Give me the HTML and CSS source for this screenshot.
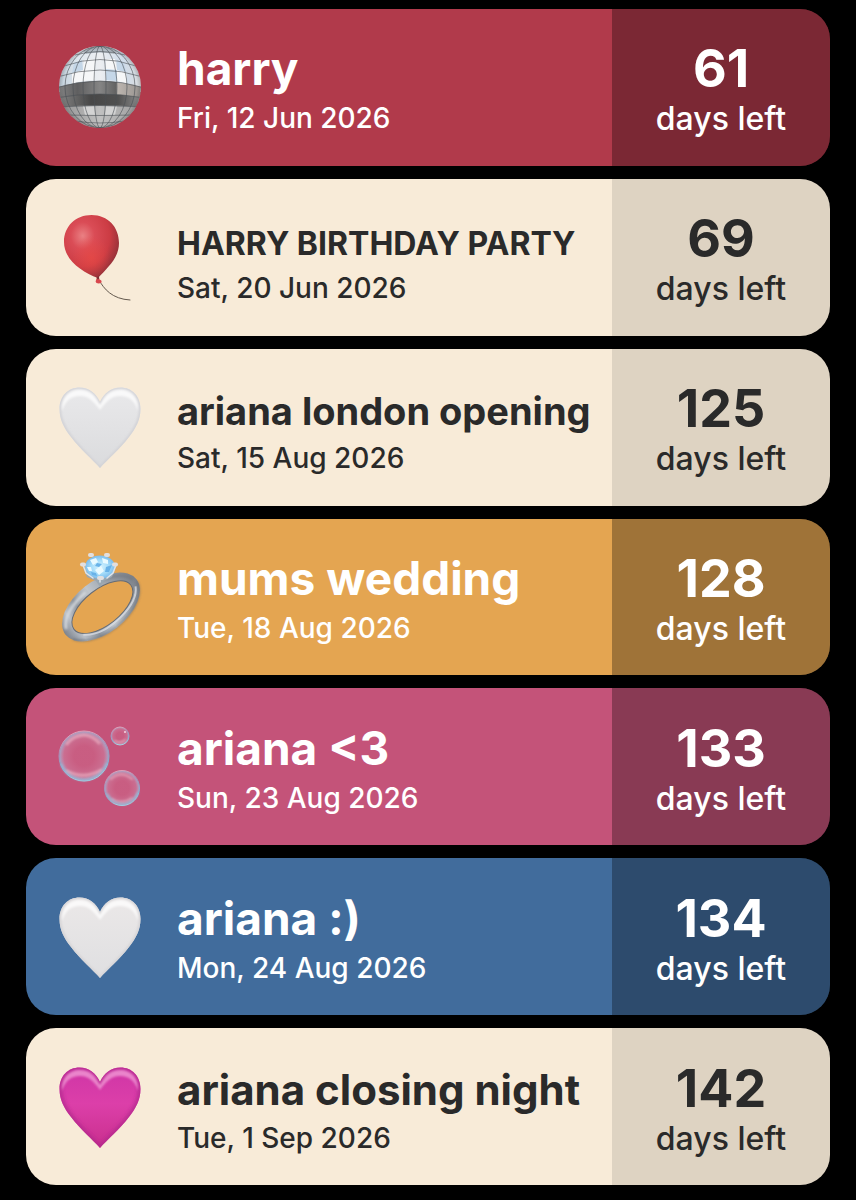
FILE: index.html
```html
<!DOCTYPE html>
<html lang="en">
<head>
<meta charset="utf-8">
<meta name="viewport" content="width=device-width, initial-scale=1">
<title>Countdowns</title>
<link rel="stylesheet" href="styles.css">
</head>
<body>
<svg class="defs" aria-hidden="true">
  <defs>
    <path id="heart-shape" d="M50 91C43 83 30 72 21 60C14 51 9.500 43 9.500 32C9.500 19 18 10.500 29.500 10.500C39 10.500 46 16 50 25C54 16 61 10.500 70.500 10.500C82 10.500 90.500 19 90.500 32C90.500 43 86 51 79 60C70 72 57 83 50 91Z"/>
    <path id="heart-gloss" d="M12 34C11 21 19 13 30 13C39 13 45 18 50 28C55 18 61 13 70 13C81 13 89 21 88 34C85 24 79 19 70 19C61 19 56 25 50 33C44 25 39 19 30 19C21 19 15 24 12 34Z"/>
    <linearGradient id="white-fill" x1="0" y1="0" x2="0" y2="1"><stop offset="0" stop-color="#e9e9eb"/><stop offset=".5" stop-color="#e2e2e4"/><stop offset="1" stop-color="#dadbdd"/></linearGradient>
    <linearGradient id="bright-fill" x1="0" y1="0" x2="0" y2="1"><stop offset="0" stop-color="#ebe8e8"/><stop offset="1" stop-color="#dfdfe1"/></linearGradient>
    <linearGradient id="pink-fill" x1="0" y1="0" x2="0" y2="1"><stop offset="0" stop-color="#cf35a6"/><stop offset=".45" stop-color="#dc3fa9"/><stop offset="1" stop-color="#c92f8d"/></linearGradient>
    <clipPath id="heart-clip"><use href="#heart-shape"/></clipPath>
    <filter id="soft1" x="-20%" y="-20%" width="140%" height="140%"><feGaussianBlur stdDeviation="1.200"/></filter>
    <filter id="soft2" x="-20%" y="-20%" width="140%" height="140%"><feGaussianBlur stdDeviation="2"/></filter>
  </defs>
</svg>

<main>
  <ul class="list">
    <li class="card red">
      <div class="event">
        <svg class="icon" viewBox="0 0 100 100" role="img" aria-label="Mirror ball">
          <defs>
            <clipPath id="ball"><circle cx="50" cy="50" r="41"/></clipPath>
            <linearGradient id="ball-top" x1="0" x2="1"><stop offset="0" stop-color="#b9c9d6"/><stop offset=".25" stop-color="#dfe7ee"/><stop offset=".5" stop-color="#eceef1"/><stop offset=".75" stop-color="#cfdcea"/><stop offset="1" stop-color="#dcdcdc"/></linearGradient>
            <linearGradient id="ball-mid" x1="0" x2="1"><stop offset="0" stop-color="#8a8a8a"/><stop offset=".25" stop-color="#5f5f60"/><stop offset=".5" stop-color="#858585"/><stop offset=".68" stop-color="#626262"/><stop offset=".69" stop-color="#bdb6b0"/><stop offset="1" stop-color="#8f8b88"/></linearGradient>
            <linearGradient id="ball-dark" x1="0" x2="1"><stop offset="0" stop-color="#8d8d8d"/><stop offset=".4" stop-color="#474747"/><stop offset=".7" stop-color="#505050"/><stop offset="1" stop-color="#999"/></linearGradient>
            <linearGradient id="ball-low" x1="0" x2="1"><stop offset="0" stop-color="#8d8d8d"/><stop offset=".5" stop-color="#c0c0c0"/><stop offset="1" stop-color="#999"/></linearGradient>
            <radialGradient id="ball-rim"><stop offset=".9" stop-color="#333" stop-opacity="0"/><stop offset="1" stop-color="#444" stop-opacity=".25"/></radialGradient>
          </defs>
          <g clip-path="url(#ball)">
            <path fill="url(#ball-top)" d="M5 5H95V55H5Z"/>
            <path fill="#f6f7f8" d="M34 23Q39 22 45 22V32Q39 32 33 33ZM22 36Q27 34 33 33V44Q27 45 22 47ZM33 33Q39 32 45 32V43Q39 43 33 44ZM56 22H65L67 33H56ZM67 33L76 35L77 47L67 44Z"/>
            <path fill="#c5d7e8" d="M56 32L67 33V44L56 43ZM67 23L74 26L76 35L67 33ZM24 26L32 23L33 33L22 36Z"/>
            <path fill="#b3bcc4" d="M33 14Q40 10 50 9Q60 10 67 14L64 17Q50 14 36 17Z"/>
            <path fill="url(#ball-mid)" d="M5 51Q50 37 95 51V66H5Z"/>
            <path fill="url(#ball-dark)" d="M5 61Q50 53 95 61V76H5Z"/>
            <path fill="url(#ball-low)" d="M5 70Q50 67 95 70V95H5Z"/>
            <path fill="#d3d3d3" d="M33 69H44L45 78H35ZM56 69H67L65 78H55Z"/>
            <circle cx="50" cy="50" r="41" fill="url(#ball-rim)"/>
            <g fill="none" stroke="#4b5055" stroke-width=".7" stroke-opacity=".85">
              <ellipse cx="50" cy="50" rx="6" ry="41"/><ellipse cx="50" cy="50" rx="17" ry="41"/><ellipse cx="50" cy="50" rx="27" ry="41"/><ellipse cx="50" cy="50" rx="35" ry="41"/>
              <path d="M25 18Q50 11 75 18M14 29Q50 16 86 29M7 40Q50 26 93 40M5 51Q50 37 95 51M5 61Q50 53 95 61M5 70Q50 67 95 70M15 78Q50 79 85 78M25 84Q50 88 75 84"/>
            </g>
          </g>
        </svg>
        <div class="text">
          <h2><span class="large">harry</span></h2>
          <time datetime="2026-06-12">Fri, 12 Jun 2026</time>
        </div>
      </div>
      <p class="count"><strong>61</strong><span>days left</span></p>
    </li>

    <li class="card cream">
      <div class="event">
        <svg class="icon" viewBox="0 0 100 100" role="img" aria-label="Balloon">
          <defs>
            <radialGradient id="balloon" cx=".34" cy=".33" r=".72"><stop offset="0" stop-color="#ea8083"/><stop offset=".3" stop-color="#da4c56"/><stop offset=".68" stop-color="#cc3c44"/><stop offset="1" stop-color="#8f3038"/></radialGradient>
            <radialGradient id="balloon-glow" cx=".5" cy=".68" r=".35"><stop offset="0" stop-color="#ea4a45" stop-opacity=".7"/><stop offset="1" stop-color="#ea4a45" stop-opacity="0"/></radialGradient>
          </defs>
          <path fill="none" stroke="#64594e" stroke-width="1" stroke-linecap="round" d="M49 73C54 82 62 92 80 93"/>
          <path fill="url(#balloon)" d="M41.500 8C58 8 69 20 69 36C69 51 58 60 48 71C32 65 14 53 14 35C14 19 26 8 41.500 8Z"/>
          <path fill="url(#balloon-glow)" d="M41.500 8C58 8 69 20 69 36C69 51 58 60 48 71C32 65 14 53 14 35C14 19 26 8 41.500 8Z"/>
          <path fill="#d8474d" d="M47 70L49 70L49.500 72.500Q52 73 51.500 75.500Q49 77 46.500 76Q45 75 46 73Z"/>
          <path fill="#7b2e32" d="M46.500 70L49 69.500L49 72L47.500 72.500Z"/>
        </svg>
        <div class="text">
          <h2><span class="small">HARRY BIRTHDAY PARTY</span></h2>
          <time datetime="2026-06-20">Sat, 20 Jun 2026</time>
        </div>
      </div>
      <p class="count"><strong>69</strong><span>days left</span></p>
    </li>

    <li class="card cream">
      <div class="event">
        <svg class="icon" viewBox="0 0 100 100" role="img" aria-label="White heart">
          <use href="#heart-shape" fill="url(#white-fill)"/>
          <g clip-path="url(#heart-clip)"><use href="#heart-shape" fill="none" stroke="#d2d2d6" stroke-width="3" filter="url(#soft1)"/><use href="#heart-gloss" fill="#fff" opacity=".75" filter="url(#soft1)"/></g>
        </svg>
        <div class="text">
          <h2><span class="medium">ariana london opening</span></h2>
          <time datetime="2026-08-15">Sat, 15 Aug 2026</time>
        </div>
      </div>
      <p class="count"><strong>125</strong><span>days left</span></p>
    </li>

    <li class="card orange">
      <div class="event">
        <svg class="icon" viewBox="0 0 100 100" role="img" aria-label="Ring">
          <defs>
            <linearGradient id="band" x1="0" y1="0" x2="1" y2="0"><stop offset="0" stop-color="#7d838c"/><stop offset=".15" stop-color="#b9bfc7"/><stop offset=".3" stop-color="#8d949d"/><stop offset=".5" stop-color="#c0c6cc"/><stop offset=".75" stop-color="#989fa7"/><stop offset="1" stop-color="#7b8088"/></linearGradient>
            <radialGradient id="gem"><stop offset="0" stop-color="#d9f4ff"/><stop offset=".6" stop-color="#a3dbf9"/><stop offset="1" stop-color="#7dbdec"/></radialGradient>
          </defs>
          <g transform="rotate(-38 51 60)">
            <path fill="url(#band)" fill-rule="evenodd" d="M6 60a45 26 0 1 0 90 0a45 26 0 1 0 -90 0ZM16 61a36 18 0 1 0 72 0a36 18 0 1 0 -72 0Z"/>
            <path fill="none" stroke="#666c75" stroke-width="1" d="M16 61a36 18 0 1 0 72 0a36 18 0 1 0 -72 0Z"/>
            <path fill="none" stroke="#dde1e5" stroke-width="3" opacity=".8" filter="url(#soft1)" d="M10 56C14 46 29 40 48 39"/>
            <path fill="none" stroke="#d8dce2" stroke-width="2" opacity=".8" d="M20 71C30 80 45 82 61 80C77 78 87 72 91 65"/>
            <path fill="none" stroke="#5d646e" stroke-width="1.500" opacity=".7" filter="url(#soft1)" d="M9 68C18 81 38 87 58 85C80 83 94 73 95 62"/>
            <path fill="none" stroke="#6d737d" stroke-width="3" opacity=".5" filter="url(#soft1)" d="M67 39C81 42 91 50 93 58"/>
          </g>
          <path fill="#9aa7b1" d="M33 20L37 30L46 34L50 40L54 34L62 30L66 20L60 28L50 31L39 28Z"/>
          <ellipse cx="50" cy="20" rx="15" ry="11.500" fill="url(#gem)"/>
          <path fill="#eafaff" d="M40 13L46 11L48 15L43 18ZM52 11L58 13L58 17L53 16ZM45 23L51 19L54 24L49 28ZM37 20L41 20L42 24L39 24Z"/>
          <path fill="#69b2e8" d="M47 16L52 17L49 20L45 19ZM56 20L62 18L59 25L55 25ZM41 25L46 26L47 29L42 28Z"/>
          <g fill="none" stroke="#dfe5ea" stroke-width="1.500" stroke-linecap="round"><path d="M33 18L36 26L43 31M66 18L63 26L57 31M50 31V35"/></g>
          <g fill="#e2dfdf"><rect x="38" y="6" width="6" height="4" rx="2"/><rect x="54" y="6" width="6" height="4" rx="2"/><rect x="30" y="15.500" width="6" height="4" rx="2"/><rect x="62" y="15.500" width="6" height="4" rx="2"/><rect x="47" y="29" width="7" height="4" rx="2"/></g>
        </svg>
        <div class="text">
          <h2><span class="large">mums wedding</span></h2>
          <time datetime="2026-08-18">Tue, 18 Aug 2026</time>
        </div>
      </div>
      <p class="count"><strong>128</strong><span>days left</span></p>
    </li>

    <li class="card pink">
      <div class="event">
        <svg class="icon" viewBox="0 0 100 100" role="img" aria-label="Bubbles">
          <defs>
            <radialGradient id="bubble"><stop offset=".4" stop-color="#e39ab4" stop-opacity=".15"/><stop offset=".8" stop-color="#d5a0bd" stop-opacity=".35"/><stop offset=".96" stop-color="#a6a9cb" stop-opacity=".85"/><stop offset="1" stop-color="#9aa9c9" stop-opacity=".7"/></radialGradient>
            <linearGradient id="bubble-edge" x1="0" y1="0" x2=".2" y2="1"><stop offset="0" stop-color="#eba4b8"/><stop offset=".45" stop-color="#a98eb7"/><stop offset=".8" stop-color="#82b6d6"/><stop offset="1" stop-color="#a4d2e2"/></linearGradient>
          </defs>
          <g fill="url(#bubble)" stroke="url(#bubble-edge)" stroke-width="1">
            <circle cx="34" cy="39" r="25"/><circle cx="70" cy="19" r="9"/><circle cx="72" cy="71" r="17.500"/>
          </g>
          <g fill="none" stroke="#f4c3d0" stroke-linecap="round" opacity=".55" filter="url(#soft1)">
            <path stroke-width="3" d="M17 27Q23 19 34 18Q43 19 49 26"/><path stroke-width="3" d="M17 54Q34 63 51 53"/><path stroke-width="2" d="M61 62Q71 53 82 62M62 82Q72 88 82 81M65 24Q70 27 75 23"/>
          </g>
          <path fill="none" stroke="#8fc3df" stroke-width="2" opacity=".7" filter="url(#soft1)" d="M11 47Q17 62 34 63Q52 61 57 46M57 77Q64 88 75 87Q85 84 88 75"/>
          <circle cx="75" cy="15" r="1" fill="#f4d7e2"/>
        </svg>
        <div class="text">
          <h2><span class="large">ariana &lt;3</span></h2>
          <time datetime="2026-08-23">Sun, 23 Aug 2026</time>
        </div>
      </div>
      <p class="count"><strong>133</strong><span>days left</span></p>
    </li>

    <li class="card blue">
      <div class="event">
        <svg class="icon" viewBox="0 0 100 100" role="img" aria-label="White heart">
          <use href="#heart-shape" fill="url(#bright-fill)"/>
          <g clip-path="url(#heart-clip)"><use href="#heart-shape" fill="none" stroke="#d6d4d6" stroke-width="3" filter="url(#soft1)"/><use href="#heart-gloss" fill="#fff" opacity=".75" filter="url(#soft1)"/></g>
        </svg>
        <div class="text">
          <h2><span class="large">ariana :)</span></h2>
          <time datetime="2026-08-24">Mon, 24 Aug 2026</time>
        </div>
      </div>
      <p class="count"><strong>134</strong><span>days left</span></p>
    </li>

    <li class="card cream">
      <div class="event">
        <svg class="icon" viewBox="0 0 100 100" role="img" aria-label="Pink heart">
          <use href="#heart-shape" fill="url(#pink-fill)"/>
          <g clip-path="url(#heart-clip)"><use href="#heart-shape" fill="none" stroke="#b0268c" stroke-width="4" filter="url(#soft2)"/><use href="#heart-gloss" fill="#f3a0d8" opacity=".75" filter="url(#soft1)"/></g>
        </svg>
        <div class="text">
          <h2><span class="big">ariana closing night</span></h2>
          <time datetime="2026-09-01">Tue, 1 Sep 2026</time>
        </div>
      </div>
      <p class="count"><strong>142</strong><span>days left</span></p>
    </li>
  </ul>
</main>
</body>
</html>
```
FILE: styles.css
```css
* {
  box-sizing: border-box;
}

body {
  margin: 0;
  background: #000;
  font-family: Inter, "Liberation Sans", sans-serif;
}

.defs {
  position: absolute;
  width: 0;
  height: 0;
}

.list {
  display: grid;
  grid-auto-rows: 1fr;
  gap: 13px;
  min-height: 100vh;
  margin: 0;
  padding: 9px 26px 15px;
  list-style: none;
}

.card {
  display: flex;
  overflow: hidden;
  border-radius: 30px;
  color: #fff;
}

.event {
  display: flex;
  flex: 1;
  align-items: center;
  gap: 27px;
  min-width: 0;
  padding-left: 24px;
}

.icon {
  flex: none;
  width: 100px;
  height: 100px;
}

.text {
  min-width: 0;
  padding-top: 6px;
  white-space: nowrap;
}

h2 {
  margin: 0;
  font-size: 48px;
  font-weight: 700;
  line-height: 56px;
}

h2 span {
  line-height: 1;
}

.large {
  font-size: 46px;
}

.big {
  font-size: 42px;
}

.medium {
  font-size: 38px;
}

.small {
  font-size: 32px;
}

time {
  display: block;
  font-size: 28px;
  font-weight: 500;
  line-height: 44px;
}

.count {
  display: flex;
  flex: none;
  flex-direction: column;
  align-items: center;
  justify-content: center;
  width: 218px;
  margin: 0;
  padding-top: 8px;
  background: rgba(0, 0, 0, 0.3);
}

.count strong {
  font-size: 52px;
  font-weight: 700;
  line-height: 56px;
}

.count span {
  font-size: 32px;
  font-weight: 500;
  line-height: 44px;
}

.red {
  background: #b13a4b;
}

.orange {
  background: #e4a551;
}

.pink {
  background: #c45379;
}

.blue {
  background: #416c9c;
}

.cream {
  background: #f8ebd8;
  color: #2a2a2a;
}

.cream .count {
  background: rgba(0, 0, 0, 0.1);
}
```
